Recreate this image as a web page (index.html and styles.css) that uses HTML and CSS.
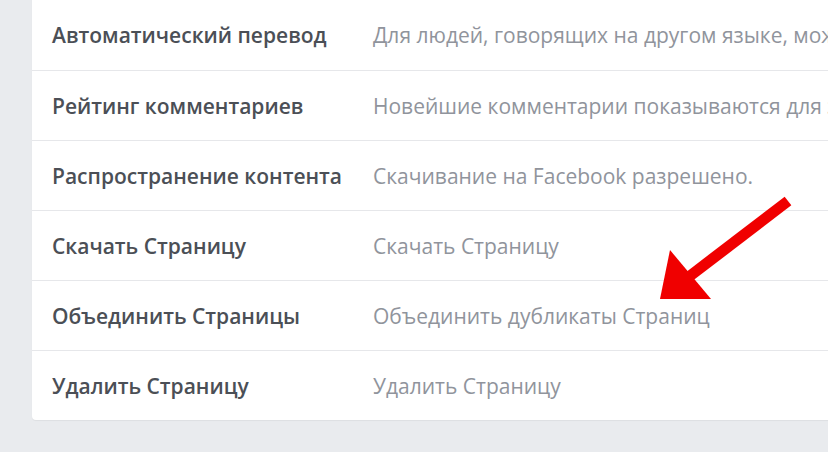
FILE: index.html
```html
<!DOCTYPE html>
<html lang="ru">
<head>
    <meta charset="UTF-8">
    <title>Настройки Страницы</title>
    <link rel="stylesheet" href="styles.css">
</head>
<body>
    <div class="settings-card">
        <div class="setting-row">
            <div class="setting-label">Автоматический перевод</div>
            <div class="setting-value">Для людей, говорящих на другом языке, может отображаться перевод публикаций.</div>
        </div>
        <div class="setting-row">
            <div class="setting-label">Рейтинг комментариев</div>
            <div class="setting-value">Новейшие комментарии показываются для этой Страницы по умолчанию.</div>
        </div>
        <div class="setting-row">
            <div class="setting-label">Распространение контента</div>
            <div class="setting-value">Скачивание на Facebook разрешено.</div>
        </div>
        <div class="setting-row">
            <div class="setting-label">Скачать Страницу</div>
            <div class="setting-value">Скачать Страницу</div>
        </div>
        <div class="setting-row">
            <div class="setting-label">Объединить Страницы</div>
            <div class="setting-value">Объединить дубликаты Страниц</div>
        </div>
        <div class="setting-row">
            <div class="setting-label">Удалить Страницу</div>
            <div class="setting-value">Удалить Страницу</div>
        </div>
    </div>

    <!-- стрелка поверх списка -->
    <svg class="pointer-arrow" width="828" height="452" viewBox="0 0 828 452">
        <line x1="788" y1="201" x2="686" y2="279" stroke="#f00000" stroke-width="11" />
        <polygon points="660,299 670,250 711,299" fill="#f00000" />
    </svg>
</body>
</html>
```

FILE: styles.css
```css
body {
    margin: 0;
    background-color: #e9ebee;
    font-family: "Open Sans", "Noto Sans", sans-serif;
    width: 828px;
    height: 452px;
    overflow: hidden;
    position: relative;
}
.settings-card {
    background-color: #fff;
    margin-left: 32px;
    margin-top: -1px;
    border-radius: 0 0 4px 4px;
    width: 820px;
    box-shadow: 0 1px 1px rgba(0, 0, 0, 0.05);
}
.setting-row {
    display: flex;
    align-items: center;
    height: 70px;
    border-top: 1px solid #e6e7ea;
    box-sizing: border-box;
    white-space: nowrap;
    overflow: hidden;
}
.setting-row:first-child {
    height: 71px;
}
.setting-label {
    width: 321px;
    flex-shrink: 0;
    padding-left: 20px;
    font-size: 21px;
    font-weight: 600;
    color: #4b4f56;
}
.setting-value {
    font-size: 21px;
    color: #90949c;
}
.pointer-arrow {
    position: absolute;
    left: 0;
    top: 0;
}
```
